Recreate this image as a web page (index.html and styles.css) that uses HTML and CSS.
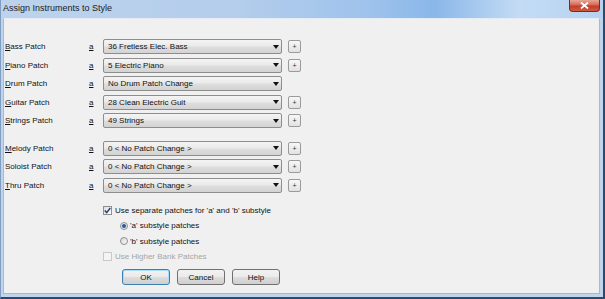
FILE: index.html
```html
<!DOCTYPE html>
<html lang="en">
  <head>
    <meta charset="UTF-8" />
    <title>Assign Instruments to Style</title>
    <link rel="stylesheet" href="styles.css">
  </head>
  <body>
    <div class="window">
      <div class="titlebar">
        <span class="title">Assign Instruments to Style</span>
        <span class="close">
          <svg width="9" height="7" viewBox="0 0 9 7"><path d="M1 0.5 L8 6.5 M8 0.5 L1 6.5" stroke="#fff" stroke-width="1.8"/></svg>
        </span>
      </div>
      <div class="client">
        <div class="group">
          <div class="row">
            <span class="name"><u>B</u>ass Patch</span>
            <span class="sub"><u>a</u></span>
            <div class="combo"><span>36 Fretless Elec. Bass</span><i class="arrow"></i></div>
            <span class="plus">+</span>
          </div>
          <div class="row">
            <span class="name"><u>P</u>iano Patch</span>
            <span class="sub"><u>a</u></span>
            <div class="combo"><span>5 Electric Piano</span><i class="arrow"></i></div>
            <span class="plus">+</span>
          </div>
          <div class="row">
            <span class="name"><u>D</u>rum Patch</span>
            <span class="sub"><u>a</u></span>
            <div class="combo"><span>No Drum Patch Change</span><i class="arrow"></i></div>
          </div>
          <div class="row">
            <span class="name"><u>G</u>uitar Patch</span>
            <span class="sub"><u>a</u></span>
            <div class="combo"><span>28 Clean Electric Guit</span><i class="arrow"></i></div>
            <span class="plus">+</span>
          </div>
          <div class="row">
            <span class="name"><u>S</u>trings Patch</span>
            <span class="sub"><u>a</u></span>
            <div class="combo"><span>49 Strings</span><i class="arrow"></i></div>
            <span class="plus">+</span>
          </div>
        </div>
        <div class="group">
          <div class="row">
            <span class="name"><u>M</u>elody Patch</span>
            <span class="sub"><u>a</u></span>
            <div class="combo"><span>0 &lt; No Patch Change &gt;</span><i class="arrow"></i></div>
            <span class="plus">+</span>
          </div>
          <div class="row">
            <span class="name">Soloist Patch</span>
            <span class="sub"><u>a</u></span>
            <div class="combo"><span>0 &lt; No Patch Change &gt;</span><i class="arrow"></i></div>
            <span class="plus">+</span>
          </div>
          <div class="row">
            <span class="name"><u>T</u>hru Patch</span>
            <span class="sub"><u>a</u></span>
            <div class="combo"><span>0 &lt; No Patch Change &gt;</span><i class="arrow"></i></div>
            <span class="plus">+</span>
          </div>
        </div>
        <div class="options">
          <div class="opt">
            <span class="check">
              <svg width="7" height="7" viewBox="0 0 7 7"><path d="M0.8 3.6 L2.7 5.6 L6.3 1" fill="none" stroke="#2a3f74" stroke-width="1.5"/></svg>
            </span>
            <span>Use separate patches for 'a' and 'b' substyle</span>
          </div>
          <div class="opt radio">
            <span class="dot on"></span>
            <span>'a' substyle patches</span>
          </div>
          <div class="opt radio">
            <span class="dot"></span>
            <span>'b' substyle patches</span>
          </div>
          <div class="opt disabled">
            <span class="check"></span>
            <span>Use Higher Bank Patches</span>
          </div>
          <div class="buttons">
            <span class="btn default">OK</span>
            <span class="btn">Cancel</span>
            <span class="btn">Help</span>
          </div>
        </div>
      </div>
    </div>
  </body>
</html>
```

FILE: styles.css
```css
body {
  margin: 0;
  font-family: "Liberation Sans", Arial, sans-serif;
  color: #111;
}
.window {
  width: 605px;
  height: 299px;
  box-sizing: border-box;
  display: flex;
  flex-direction: column;
  background-color: #bfd5ee;
  border-left: 1px solid #7f9dc1;
  border-right: 2px solid #2c4a6d;
  border-bottom: 2px solid #2c4a6d;
}
.titlebar {
  height: 18px;
  flex-shrink: 0;
  display: flex;
  align-items: flex-start;
  background: linear-gradient(to right, #bdd3ec 0%, #b3cdeb 40%, #9dc2ec 62%, #8ab7e8 72%, #c3dbf5 86%, #b7d2f0 100%);
}
.title {
  font-size: 9px;
  line-height: 17px;
  padding-left: 2px;
  color: #1b1b1b;
}
.close {
  margin-left: auto;
  margin-right: 3px;
  width: 31px;
  height: 12px;
  box-sizing: border-box;
  display: flex;
  align-items: center;
  justify-content: center;
  border: 1px solid #7a2a22;
  border-top: none;
  border-radius: 0 0 4px 4px;
  background: linear-gradient(#e8a596 0%, #d36a57 45%, #c23d2a 55%, #cf5a3f 100%);
}
.client {
  flex: 1;
  margin: 0 3px 3px 2px;
  padding: 20px 0 0 1px;
  background-color: #f0f0f0;
  border: 1px solid #a6b9d0;
  border-top-color: #e4ecf5;
}
.group {
  display: flex;
  flex-direction: column;
  gap: 3.5px;
}
.group + .group {
  margin-top: 12.5px;
}
.row {
  display: flex;
  align-items: center;
  height: 15px;
  font-size: 8px;
}
.name {
  width: 84px;
}
.sub {
  width: 14px;
}
.combo {
  width: 179px;
  height: 15px;
  box-sizing: border-box;
  display: flex;
  align-items: center;
  padding: 0 2px 0 4px;
  border: 1px solid #8d8d8d;
  border-radius: 2px;
  background: linear-gradient(#f4f4f4 0%, #eaeaea 45%, #dddddd 55%, #d3d3d3 100%);
}
.arrow {
  margin-left: auto;
  width: 0;
  height: 0;
  border-left: 3px solid transparent;
  border-right: 3px solid transparent;
  border-top: 4px solid #111;
}
.plus {
  width: 13px;
  height: 13px;
  margin-left: 6px;
  box-sizing: border-box;
  display: flex;
  align-items: center;
  justify-content: center;
  font-size: 7px;
  line-height: 1;
  color: #333;
  border: 1px solid #9a9a9a;
  border-radius: 2px;
  background: linear-gradient(#f7f7f7, #e2e2e2);
}
.options {
  margin: 10px 0 0 98px;
}
.opt {
  height: 15.5px;
  display: flex;
  align-items: center;
  gap: 3px;
  font-size: 8px;
}
.check {
  width: 9px;
  height: 9px;
  box-sizing: border-box;
  display: flex;
  align-items: center;
  justify-content: center;
  border: 1px solid #8e8f8f;
  background: linear-gradient(135deg, #dcdcdc, #ffffff);
}
.opt.radio {
  padding-left: 17px;
  gap: 2px;
}
.dot {
  width: 8px;
  height: 8px;
  box-sizing: border-box;
  border-radius: 50%;
  border: 1px solid #8e8f8f;
  background: linear-gradient(135deg, #d6d6d6, #fbfbfb);
}
.dot.on {
  background: radial-gradient(circle, #2b4d7a 0, #3f6da5 1.6px, #dfe5ec 2.4px, #f4f4f4 4px);
}
.opt.disabled {
  color: #a5a5a5;
}
.opt.disabled .check {
  border-color: #c8c8c8;
  background: #f4f4f4;
}
.buttons {
  display: flex;
  gap: 7px;
  margin: 4.5px 0 0 19px;
}
.btn {
  width: 48px;
  height: 16px;
  box-sizing: border-box;
  display: flex;
  align-items: center;
  justify-content: center;
  font-size: 8px;
  border: 1px solid #707070;
  border-radius: 3px;
  background: linear-gradient(#f2f2f2 0%, #ebebeb 48%, #dddddd 52%, #cfcfcf 100%);
}
.btn.default {
  border-color: #3c7fb1;
  box-shadow: inset 0 0 0 1px #a9dcf6;
}
```
